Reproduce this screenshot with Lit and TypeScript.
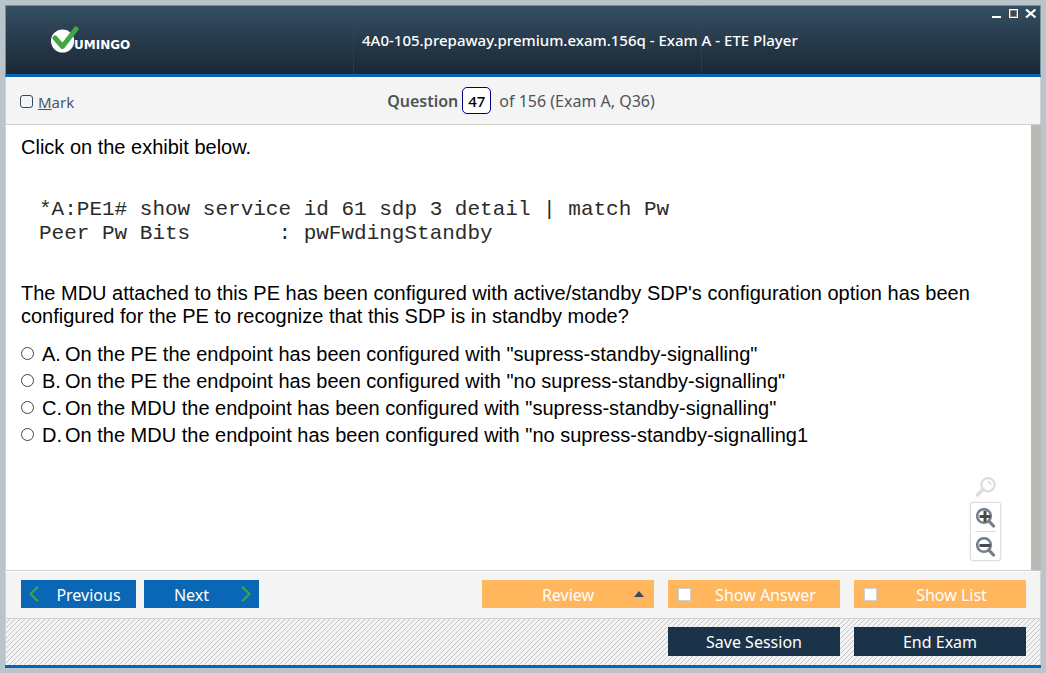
import { LitElement, html, css, svg } from "lit";
import { customElement, state } from "lit/decorators.js";

const OPTIONS = [
  ["A", 'On the PE the endpoint has been configured with "supress-standby-signalling"'],
  ["B", 'On the PE the endpoint has been configured with "no supress-standby-signalling"'],
  ["C", 'On the MDU the endpoint has been configured with "supress-standby-signalling"'],
  ["D", 'On the MDU the endpoint has been configured with "no supress-standby-signalling1'],
];

const EXHIBIT = `*A:PE1# show service id 61 sdp 3 detail | match Pw
Peer Pw Bits       : pwFwdingStandby`;

@customElement("app-root")
export class AppRoot extends LitElement {
  @state() private answer = "";

  static styles = css`
    :host {
      display: flex;
      min-height: 100vh;
      box-sizing: border-box;
      padding: 5px;
      background: #b9c5cb;
      font-family: "Noto Sans", sans-serif;
    }
    * { box-sizing: border-box; }
    button { font: inherit; border: 0; padding: 0; margin: 0; cursor: pointer; }
    input { margin: 0; }
    .window {
      flex: 1;
      min-width: 0;
      display: flex;
      flex-direction: column;
      border-bottom: 3px solid #0763b3;
    }
    .titlebar {
      position: relative;
      height: 72px;
      display: grid;
      grid-template-columns: minmax(0, 347fr) minmax(0, 349fr) minmax(0, 338fr);
      align-items: center;
      border: 1px solid #7d8f95;
      border-bottom: 3px solid #0763b3;
      background: linear-gradient(#354e62, #1a2836);
      color: #fff;
    }
    .logo { margin-left: 45px; }
    .title {
      margin: 0; align-self: stretch; display: flex; align-items: center;
      border: dotted #35417f; border-width: 0 1px;
      font-size: 15px; font-weight: 500; line-height: 20px; padding-left: 8px; white-space: nowrap;
    }
    .controls { position: absolute; top: 1px; right: 3px; display: flex; gap: 5px; }
    .controls button { width: 12px; height: 14px; background: none; color: #fff; display: flex; align-items: center; justify-content: center; }
    .infobar {
      height: 48px;
      display: grid;
      grid-template-columns: 1fr auto 1fr;
      align-items: center;
      background: #f4f4f4;
      border: solid #d0d0d0;
      border-width: 0 1px 1px;
      padding: 0 14px;
      color: #4c545a;
      font-size: 16px;
    }
    .mark { display: flex; align-items: center; gap: 5px; font-size: 15px; line-height: 20px; color: #45586a; padding-top: 2px; }
    .mark input { appearance: none; width: 13px; height: 13px; border: 1px solid #34495c; border-radius: 3px; }
    .counter { display: flex; align-items: center; gap: 4px; font-size: 16px; padding-right: 4px; }
    .counter label { font-weight: 600; }
    .counter input {
      width: 29px; height: 27px; border: 1px solid #00007b; border-radius: 5px;
      text-align: center; font: inherit; font-size: 15px; font-weight: 500; padding: 0; background: #fff; color: #000;
    }
    .counter span { padding-left: 4px; }
    .question {
      position: relative;
      flex: 1;
      background: #fff;
      border: 1px solid #d0d0d0;
      border-top: 0;
      border-right: 10px solid #bbb9b5;
      padding: 11px 14px 8px 15px;
      font: 20px/23px "Liberation Sans", Arial, sans-serif;
      color: #000;
    }
    p { margin: 0; }
    .exhibit {
      margin: 39px 0 36px 18px;
      font: 21px/24px "Liberation Mono", "Courier New", monospace;
      color: #2b2b2b;
    }
    .options { list-style: none; margin: 13px 0 0; padding: 0; }
    .options label { display: grid; grid-template-columns: 13px 15px 1fr; column-gap: 8px; line-height: 27px; align-items: center; }
    .options input { appearance: none; width: 13px; height: 13px; border: 1px solid #444; border-radius: 50%; background: #fff; margin-bottom: 3px; }
    .options input:checked { background: radial-gradient(#222 3px, #fff 4px); }
    .zoom { position: absolute; right: 30px; bottom: 9px; width: 31px; display: flex; flex-direction: column; align-items: center; gap: 4px; }
    .zoom button { display: flex; align-items: center; justify-content: center; background: none; width: 21px; height: 28px; padding-top: 2px; }
    .zoom .reset { height: 22px; padding: 0; }
    .zoombox { width: 31px; display: flex; flex-direction: column; align-items: center; border: 1px solid #dedede; border-radius: 3px; box-shadow: 0 0 2px #ddd; background: #fff; }
    .zoombox button + button { border-top: 1px solid #ddd; height: 29px; }
    .actions, .session { display: flex; align-items: flex-start; background: #f4f4f4; border: solid #d0d0d0; border-width: 0 1px; padding: 8px 14px 0 15px; }
    .actions { height: 48px; border-top: 1px solid #fff; border-bottom: 1px solid #d0d0d0; gap: 8px; }
    .session { height: 46px; gap: 14px; justify-content: flex-end; background: repeating-linear-gradient(135deg, #f4f4f4 0 2.5px, #c4c4c4 2.5px 3.5355px); }
    .btn { height: 28px; display: flex; align-items: center; gap: 10px; color: #fff; font-size: 16px; line-height: 20px; }
    .btn .text { flex: 1; text-align: center; white-space: nowrap; padding-top: 1px; }
    .nav { width: 115px; background: #0967b5; padding: 0 8px; }
    .group { margin-left: auto; display: flex; gap: 14px; }
    .tool { width: 172px; background: #ffb65c; padding: 0 10px; }
    .review { padding-left: 30px; }
    .tool input { appearance: none; width: 13px; height: 13px; border: 1px solid #d0d0d0; background: #fff; }
    .tool input:checked { background: #354e62; }
    .dark { width: 172px; height: 29px; background: #1a3349; }
  `;

  private lens(color: string, sign: "" | "plus" | "minus") {
    return html`<svg width="20" height="20" viewBox="1 0 20 20" fill="none" aria-hidden="true">
      <circle cx="9" cy="8" r="6.8" stroke=${color} stroke-width="2.6" />
      <path d="M13.700 12.800L18.500 18" stroke=${color} stroke-width="3.200" stroke-linecap="round" />
      ${sign ? svg`<path d="M4.500 8.500H15.500" stroke="#4a4a4a" stroke-width="3" />` : ""}
      ${sign === "plus" ? svg`<path d="M10 3V14" stroke="#4a4a4a" stroke-width="3" />` : ""}
    </svg>`;
  }

  render() {
    return html`
      <div class="window">
        <header class="titlebar">
          <svg class="logo" width="90" height="28" viewBox="0 0 90 28" role="img" aria-label="Vumingo">
            <circle cx="11.600" cy="15" r="11.600" fill="#fff" />
            <path d="M4 12 L11.500 20.500 L25 3" fill="none" stroke="#43a645" stroke-width="5" stroke-linecap="round" stroke-linejoin="round" />
            <text x="23" y="23" fill="#fff" font-family="DejaVu Sans" font-weight="700" font-size="12">UMINGO</text>
          </svg>
          <h1 class="title">4A0-105.prepaway.premium.exam.156q - Exam A - ETE Player</h1>
          <div class="controls">
            <button aria-label="Minimize"><svg width="10" height="10" viewBox="0 0 10 10"><path d="M0 8H9" stroke="#fff" stroke-width="2" /></svg></button>
            <button aria-label="Maximize"><svg width="10" height="10" viewBox="0 0 10 10"><rect x=".5" y=".5" width="8" height="8" fill="none" stroke="#fff" /><rect x="1.5" y="1.5" width="6" height="6" fill="none" stroke="#8d8178" /></svg></button>
            <button aria-label="Close"><svg width="12" height="10" viewBox="0 0 12 10"><path d="M1 .5L10.500 8.500M10.500 .5L1 8.500" stroke="#fff" stroke-width="2.2" /></svg></button>
          </div>
        </header>
        <div class="infobar">
          <label class="mark"><input type="checkbox" /><span><u>M</u>ark</span></label>
          <div class="counter">
            <label for="number">Question</label>
            <input id="number" type="text" value="47" />
            <span>of 156 (Exam A, Q36)</span>
          </div>
        </div>
        <main class="question">
          <p>Click on the exhibit below.</p>
          <pre class="exhibit">${EXHIBIT}</pre>
          <p>The MDU attached to this PE has been configured with active/standby SDP's configuration option has been configured for the PE to recognize that this SDP is in standby mode?</p>
          <ul class="options">
            ${OPTIONS.map(
              ([key, text]) => html`<li><label>
                <input type="radio" name="answer" .checked=${this.answer === key} @change=${() => (this.answer = key)} />
                <span>${key}.</span><span>${text}</span>
              </label></li>`
            )}
          </ul>
          <div class="zoom">
            <button class="reset" aria-label="Reset zoom">
              <svg width="20" height="20" viewBox="1 0 20 20" fill="none" aria-hidden="true">
                <circle cx="13" cy="7.700" r="6.600" stroke="#dcdcdc" stroke-width="2.200" />
                <path d="M8 12.500L2.500 18" stroke="#dcdcdc" stroke-width="3.400" stroke-linecap="round" />
                <path d="M12.500 4.500Q15.500 4.800 16 8" stroke="#dcdcdc" stroke-width="1.500" />
              </svg>
            </button>
            <div class="zoombox">
              <button aria-label="Zoom in">${this.lens("#74818d", "plus")}</button>
              <button aria-label="Zoom out">${this.lens("#74818d", "minus")}</button>
            </div>
          </div>
        </main>
        <div class="actions">
          <button class="btn nav">
            <svg width="10" height="16" viewBox="0 0 10 16" fill="none"><path d="M9 .8L1.500 8L9 15.200" stroke="#43a645" stroke-width="2.200" /></svg>
            <span class="text">Previous</span>
          </button>
          <button class="btn nav">
            <span class="text">Next</span>
            <svg width="10" height="16" viewBox="0 0 10 16" fill="none"><path d="M1 .8L8.500 8L1 15.200" stroke="#43a645" stroke-width="2.200" /></svg>
          </button>
          <div class="group">
            <button class="btn tool review">
              <span class="text">Review</span>
              <svg width="10" height="6" viewBox="0 0 10 6"><path d="M0 6L5 0L10 6Z" fill="#354e62" /></svg>
            </button>
            <label class="btn tool"><input type="checkbox" /><span class="text">Show Answer</span></label>
            <label class="btn tool"><input type="checkbox" /><span class="text">Show List</span></label>
          </div>
        </div>
        <footer class="session">
          <button class="btn dark"><span class="text">Save Session</span></button>
          <button class="btn dark"><span class="text">End Exam</span></button>
        </footer>
      </div>
    `;
  }
}
